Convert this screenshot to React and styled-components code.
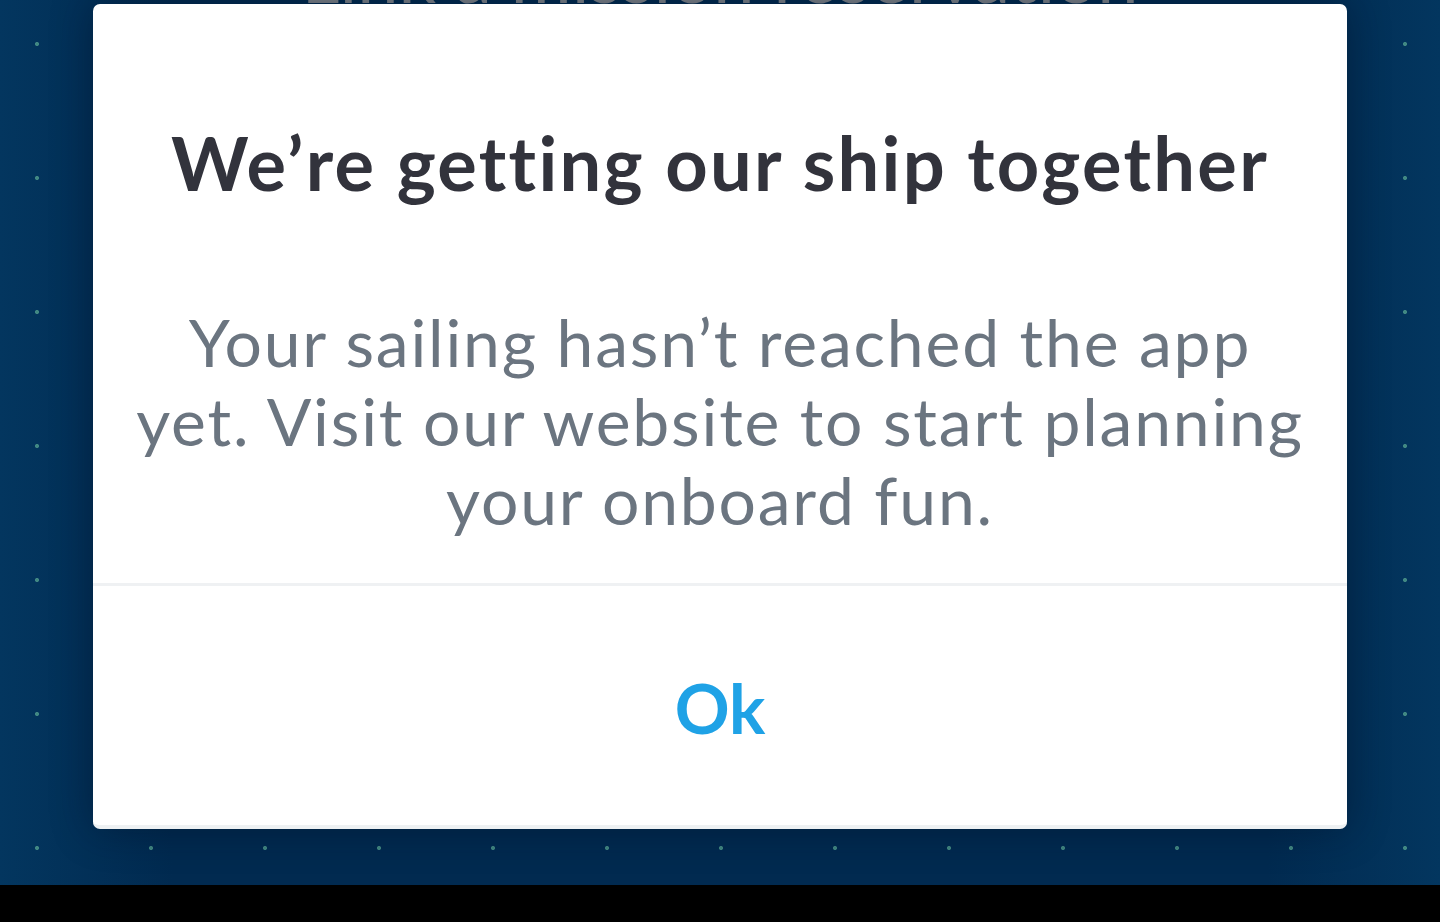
import React from 'react';
import styled, { createGlobalStyle } from 'styled-components';

const GlobalStyle = createGlobalStyle`
  html, body {
    margin: 0;
    padding: 0;
    background: #000;
  }
  body {
    font-family: Lato, "Open Sans", "Liberation Sans", sans-serif;
  }
`;

const Screen = styled.div`
  width: 1440px;
  height: 922px;
  display: flex;
  flex-direction: column;
  overflow: hidden;
`;

const Backdrop = styled.div`
  position: relative;
  height: 885px;
  overflow: hidden;
  background-color: #02325b;
  background-image:
    radial-gradient(circle, rgba(72, 145, 135, 0.9) 1.6px, transparent 2.4px),
    linear-gradient(90deg, #03365f 0%, #012a50 12%, #012a50 88%, #03365f 100%);
  background-size: 114px 134px, 100% 100%;
  background-position: -20px -23px, 0 0;
`;

const PageHeading = styled.h1`
  margin: -70px 0 0;
  text-align: center;
  font-size: 74px;
  font-weight: 400;
  color: #80858b;
  white-space: nowrap;
`;

const Dialog = styled.div`
  position: absolute;
  left: 93px;
  top: 4px;
  width: 1254px;
  height: 825px;
  box-sizing: border-box;
  background: #fff;
  border-radius: 7px;
  border-bottom: 4px solid #eef1f3;
  box-shadow: 0 0 40px rgba(0, 15, 35, 0.45);
  display: flex;
  flex-direction: column;
  overflow: hidden;
`;

const Content = styled.div`
  height: 579px;
  box-sizing: border-box;
  padding: 114px 40px 0;
  display: flex;
  flex-direction: column;
  align-items: center;
  text-align: center;
`;

const Title = styled.h2`
  margin: 0;
  font-size: 74px;
  line-height: 90px;
  font-weight: 700;
  color: #32333c;
  letter-spacing: 2.3px;
  white-space: nowrap;
`;

const Message = styled.p`
  margin: 94px 0 0;
  font-size: 66px;
  line-height: 79px;
  font-weight: 400;
  color: #6b7580;
  letter-spacing: 1.8px;
  max-width: 1170px;
`;

const Divider = styled.div`
  height: 3px;
  background: #eff1f3;
`;

const Actions = styled.div`
  flex: 1;
  display: flex;
  align-items: center;
  justify-content: center;
`;

const OkButton = styled.button`
  border: none;
  background: none;
  padding: 0;
  font-family: inherit;
  font-size: 68px;
  font-weight: 700;
  color: #1fa2e6;
  cursor: pointer;
  margin-top: 4px;
`;

const BottomBar = styled.div`
  height: 37px;
  background: #000;
`;

export default function App() {
  return (
    <>
      <GlobalStyle />
      <Screen>
        <Backdrop>
          <PageHeading>Link a mission reservation</PageHeading>
          <Dialog>
            <Content>
              <Title>We’re getting our ship together</Title>
              <Message>
                Your sailing hasn’t reached the app
                <br />
                yet. Visit our website to start planning
                <br />
                your onboard fun.
              </Message>
            </Content>
            <Divider />
            <Actions>
              <OkButton>Ok</OkButton>
            </Actions>
          </Dialog>
        </Backdrop>
        <BottomBar />
      </Screen>
    </>
  );
}
